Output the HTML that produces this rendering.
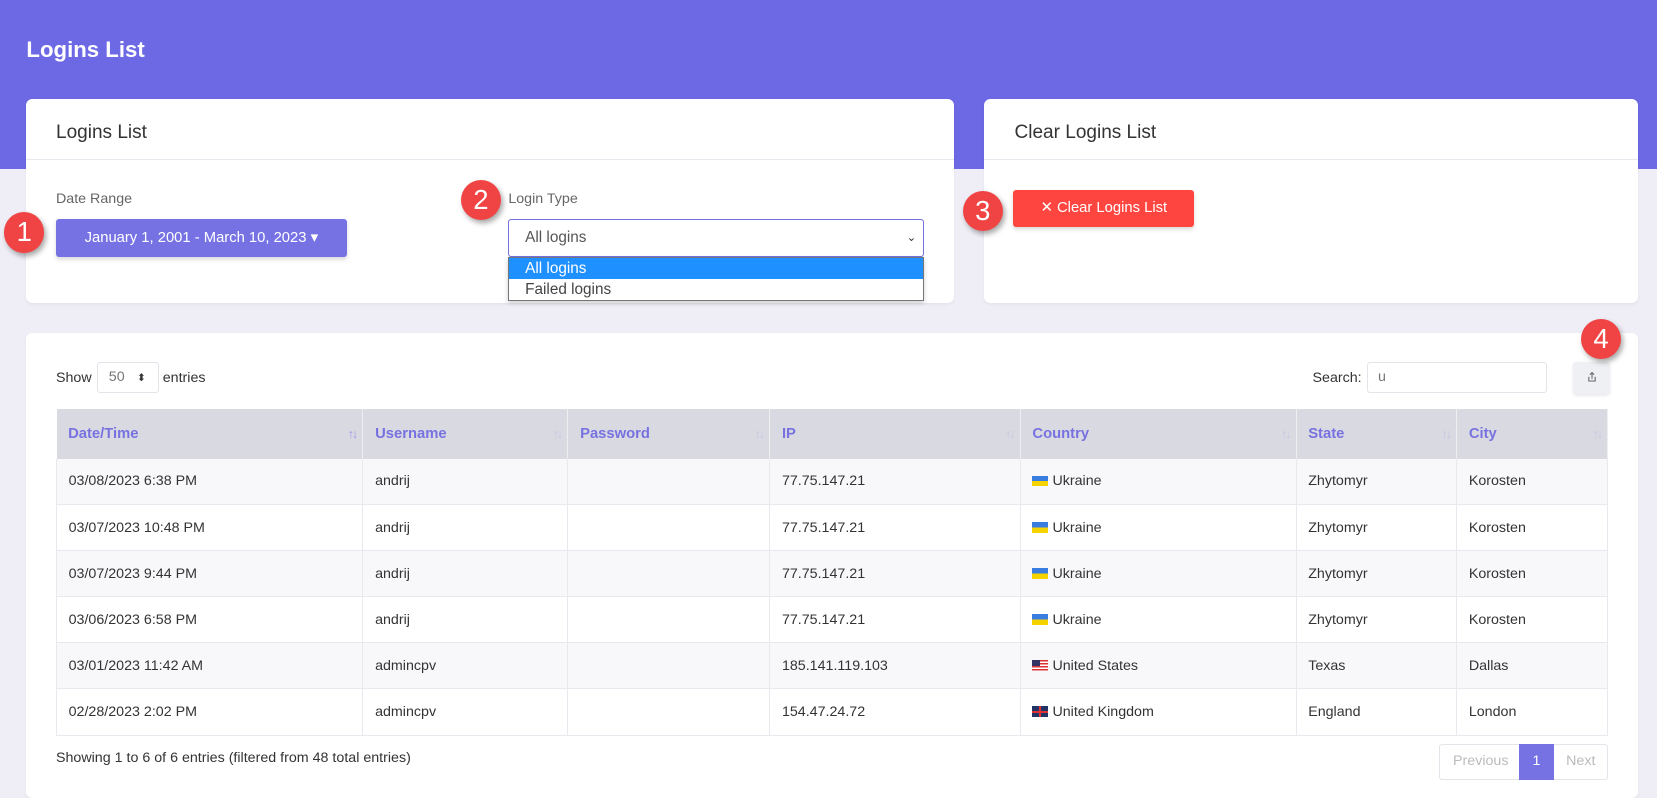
<!DOCTYPE html>
<html><head><meta charset="utf-8"><style>
html{zoom:1.0568}
*{box-sizing:border-box;margin:0;padding:0}
body{width:1568px;height:741px;overflow:hidden;background:#efeef6;font-family:"Liberation Sans",sans-serif;position:relative;color:#333}
.abs{position:absolute}
.top{left:0;top:0;width:1568px;height:160px;background:#6d69e5}
.title{left:25px;top:35px;color:#fff;font-size:21px;font-weight:bold}
.card{background:#fff;border-radius:6px;box-shadow:0 1px 3px rgba(0,0,0,.05)}
.ch{font-size:18px;color:#333}
.line{height:1px;background:#e8e8ee}
.lbl{font-size:13.5px;color:#666}
.circ{width:38px;height:38px;border-radius:50%;background:#f04444;color:#fff;font-size:26px;text-align:center;line-height:38px;box-shadow:2px 3px 5px rgba(0,0,0,.35)}
table{border-collapse:collapse;font-size:13.5px;position:absolute;left:53px;top:387px;width:1469px}
th{background:#d9d9e2;color:#7772e0;text-align:left;font-weight:bold;height:47px;padding:0 11px;border-right:1px solid #eee;position:relative;font-size:14px}
th:after{content:"↑↓";position:absolute;right:6px;top:17px;color:#c6c6e0;font-size:12px;font-weight:normal;letter-spacing:-2px}
th:first-child:after{color:#9c98e8}
td{height:43.6px;padding:0 11px;border-right:1px solid #e8e8ee;border-bottom:1px solid #e8e8ee;color:#333}
td:first-child{border-left:1px solid #e8e8ee}
tr:nth-child(even) td{background:#f8f8fb}
.fl{display:inline-block;width:15px;height:10px;vertical-align:-1px;margin-right:4px}
.ua{background:linear-gradient(#3a7de0 50%,#f5d300 50%)}
.us{background:repeating-linear-gradient(#d33 0 1.4px,#fff 1.4px 2.8px);position:relative}
.us:before{content:"";position:absolute;left:0;top:0;width:7px;height:5px;background:#336}
.uk{background:#236;position:relative}
.uk:before{content:"";position:absolute;left:0;top:4px;width:15px;height:2px;background:#d33}
.uk:after{content:"";position:absolute;left:6px;top:0;width:2px;height:10px;background:#d33}
</style></head><body>
<div class="abs top"></div>
<div class="abs title">Logins List</div>

<div class="abs card" style="left:25px;top:94px;width:878px;height:193px"></div>
<div class="abs ch" style="left:53px;top:115px">Logins List</div>
<div class="abs line" style="left:25px;top:150px;width:878px"></div>
<div class="abs lbl" style="left:53px;top:181px">Date Range</div>
<div class="abs" style="left:53px;top:207px;width:275px;height:36px;background:#7672e4;border-radius:3px;color:#fff;font-size:14px;text-align:center;line-height:36px;box-shadow:0 2px 4px rgba(0,0,0,.15)">January 1, 2001 - March 10, 2023 ▾</div>
<div class="abs lbl" style="left:481px;top:181px">Login Type</div>
<div class="abs" style="left:481px;top:207px;width:393px;height:36px;border:1px solid #7672e4;border-radius:3px;font-size:14.5px;color:#555;line-height:34px;padding-left:15px">All logins<span style="position:absolute;right:6px;top:0;font-size:11px;color:#333">⌄</span></div>
<div class="abs" style="left:481px;top:243px;width:393px;height:42px;border:1px solid #777;background:#fff;font-size:14.5px;box-shadow:0 2px 4px rgba(0,0,0,.2)">
<div style="background:#1e90ff;color:#fff;height:20px;line-height:20px;padding-left:15px">All logins</div>
<div style="color:#444;height:20px;line-height:20px;padding-left:15px">Failed logins</div></div>

<div class="abs card" style="left:931px;top:94px;width:619px;height:193px"></div>
<div class="abs ch" style="left:960px;top:115px">Clear Logins List</div>
<div class="abs line" style="left:931px;top:150px;width:619px"></div>
<div class="abs" style="left:959px;top:180px;width:171px;height:35px;background:#ff453f;border-radius:3px;color:#fff;font-size:14px;text-align:center;line-height:35px;box-shadow:0 2px 4px rgba(0,0,0,.15)">✕ Clear Logins List</div>

<div class="abs card" style="left:25px;top:315px;width:1525px;height:440px"></div>
<div class="abs" style="left:53px;top:350px;font-size:13.5px">Show</div>
<div class="abs" style="left:92px;top:343px;width:58px;height:29px;border:1px solid #e4e4ea;border-radius:3px;font-size:13.5px;color:#777;line-height:27px;padding-left:10px">50 <span style="color:#333;font-size:10px;margin-left:8px">⬍</span></div>
<div class="abs" style="left:154px;top:350px;font-size:13.5px">entries</div>
<div class="abs" style="left:1242px;top:350px;font-size:13.5px">Search:</div>
<div class="abs" style="left:1294px;top:343px;width:170px;height:29px;border:1px solid #e4e4ea;border-radius:3px;font-size:13.5px;color:#777;line-height:27px;padding-left:9px">u</div>
<div class="abs" style="left:1488px;top:343px;width:35px;height:30px;background:#eef0f4;border-radius:3px;box-shadow:0 1px 3px rgba(0,0,0,.1)">
<svg width="35" height="30" viewBox="0 0 35 30"><path d="M15 14v4h6v-4M18 16v-6M16 12l2-2 2 2" fill="none" stroke="#666" stroke-width="1"/></svg></div>

<table>
<tr><th style="width:290px">Date/Time</th><th style="width:194px">Username</th><th style="width:191px">Password</th><th style="width:237px">IP</th><th style="width:261px">Country</th><th style="width:152px">State</th><th>City</th></tr>
<tr><td>03/08/2023 6:38 PM</td><td>andrij</td><td></td><td>77.75.147.21</td><td><span class="fl ua"></span>Ukraine</td><td>Zhytomyr</td><td>Korosten</td></tr>
<tr><td>03/07/2023 10:48 PM</td><td>andrij</td><td></td><td>77.75.147.21</td><td><span class="fl ua"></span>Ukraine</td><td>Zhytomyr</td><td>Korosten</td></tr>
<tr><td>03/07/2023 9:44 PM</td><td>andrij</td><td></td><td>77.75.147.21</td><td><span class="fl ua"></span>Ukraine</td><td>Zhytomyr</td><td>Korosten</td></tr>
<tr><td>03/06/2023 6:58 PM</td><td>andrij</td><td></td><td>77.75.147.21</td><td><span class="fl ua"></span>Ukraine</td><td>Zhytomyr</td><td>Korosten</td></tr>
<tr><td>03/01/2023 11:42 AM</td><td>admincpv</td><td></td><td>185.141.119.103</td><td><span class="fl us"></span>United States</td><td>Texas</td><td>Dallas</td></tr>
<tr><td>02/28/2023 2:02 PM</td><td>admincpv</td><td></td><td>154.47.24.72</td><td><span class="fl uk"></span>United Kingdom</td><td>England</td><td>London</td></tr>
</table>

<div class="abs" style="left:53px;top:710px;font-size:13.5px">Showing 1 to 6 of 6 entries (filtered from 48 total entries)</div>
<div class="abs" style="left:1362px;top:704px;width:160px;height:34px;border:1px solid #e4e4ea;border-radius:3px;font-size:13.5px;line-height:32px;color:#bbb">
<span style="position:absolute;left:12px">Previous</span>
<span style="position:absolute;left:74px;top:-1px;width:34px;height:34px;background:#7672e4;color:#fff;text-align:center;line-height:34px">1</span>
<span style="position:absolute;left:119px">Next</span></div>

<div class="abs circ" style="left:4px;top:201px">1</div>
<div class="abs circ" style="left:436px;top:170px">2</div>
<div class="abs circ" style="left:911px;top:181px">3</div>
<div class="abs circ" style="left:1496px;top:302px">4</div>
</body></html>
